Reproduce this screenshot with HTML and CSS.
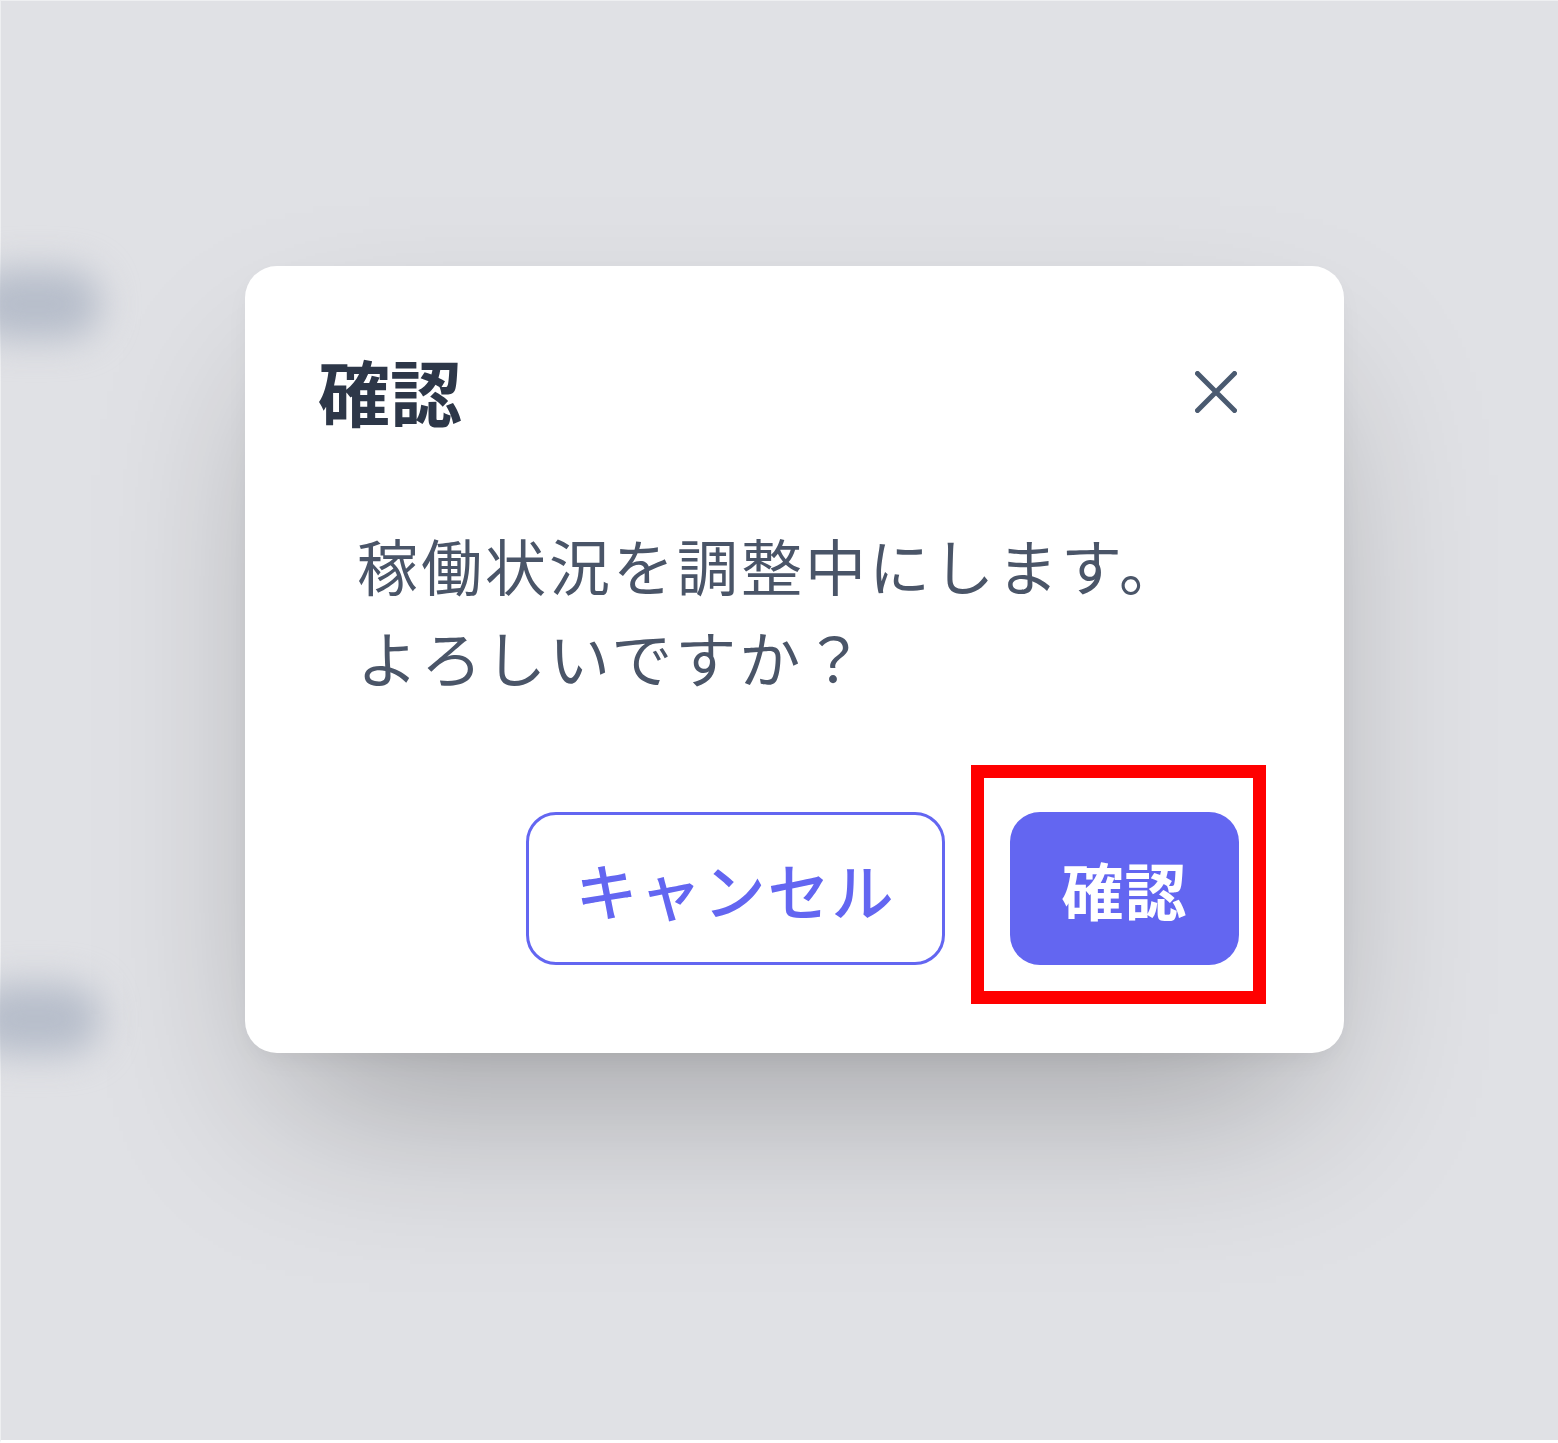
FILE: index.html
```html
<!DOCTYPE html>
<html lang="ja">
<head>
<meta charset="utf-8">
<title>確認</title>
<link rel="stylesheet" href="styles.css">
</head>
<body>
<div class="backdrop">
  <div class="bg-col">
    <div class="bg-item"></div>
    <div class="bg-item"></div>
  </div>
</div>
<div class="overlay">
  <div class="modal">
    <div class="modal-header">
      <h2 class="modal-title">確認</h2>
      <button class="close-btn" aria-label="閉じる">
        <svg width="42" height="42" viewBox="0 0 42 42" fill="none" stroke="#4a5a70" stroke-width="5" stroke-linecap="round">
          <path d="M2.5 2.5 L39.5 39.5 M39.5 2.5 L2.5 39.5"/>
        </svg>
      </button>
    </div>
    <p class="modal-body">稼働状況を調整中にします。<br>よろしいですか？</p>
    <div class="modal-footer">
      <button class="btn btn-cancel">キャンセル</button>
      <button class="btn btn-confirm">確認<span class="highlight"></span></button>
    </div>
  </div>
</div>
</body>
</html>
```
FILE: styles.css
```css
html, body {
  margin: 0;
  padding: 0;
}
body {
  width: 1558px;
  height: 1443px;
  overflow: hidden;
  background: #e0e1e5;
  font-family: "Noto Sans CJK JP", "Noto Sans", sans-serif;
  position: relative;
}
.backdrop {
  height: 100%;
  box-sizing: border-box;
  border-top: 1px solid #eeeff1;
  border-left: 1px solid #eeeff1;
  border-bottom: 3px solid #ffffff;
}
.bg-col {
  display: flex;
  flex-direction: column;
  padding-top: 268px;
  gap: 645px;
}
.bg-item {
  width: 130px;
  height: 70px;
  margin-left: -30px;
  background: #b6bdca;
  border-radius: 35px;
  filter: blur(18px);
}
.overlay {
  position: absolute;
  inset: 0;
  padding: 266px 0 0 245px;
  box-sizing: border-box;
}
.modal {
  width: 1099px;
  height: 787px;
  box-sizing: border-box;
  background: #ffffff;
  border-radius: 32px;
  box-shadow: 0 85px 170px -40px rgba(0, 0, 0, 0.28), 0 10px 30px -10px rgba(0, 0, 0, 0.08);
  padding: 86px 105px 0 75px;
  display: flex;
  flex-direction: column;
}
.modal-header {
  display: flex;
  justify-content: space-between;
  align-items: center;
  height: 76px;
}
.modal-title {
  margin: 0 0 0 -2px;
  font-size: 72px;
  line-height: 76px;
  font-weight: 700;
  color: #2d3748;
}
.close-btn {
  border: none;
  background: none;
  padding: 0;
  margin: 4px 2px 0 0;
  width: 42px;
  height: 42px;
  display: flex;
}
.modal-body {
  margin: 91px 0 0 37px;
  font-size: 61px;
  line-height: 92px;
  color: #4a5568;
  letter-spacing: 3px;
}
.modal-footer {
  margin-top: 109px;
  display: flex;
  justify-content: flex-end;
  gap: 65px;
}
.btn {
  height: 153px;
  box-sizing: border-box;
  border-radius: 30px;
  font-family: inherit;
  font-size: 62px;
  padding: 0;
}
.btn-cancel {
  width: 419px;
  background: #ffffff;
  border: 3px solid #6366f1;
  color: #6366f1;
  font-weight: 500;
  letter-spacing: 2px;
}
.btn-confirm {
  width: 229px;
  background: #6366f1;
  border: none;
  color: #ffffff;
  font-weight: 700;
  letter-spacing: 1px;
  position: relative;
}
.highlight {
  position: absolute;
  left: -39px;
  top: -47px;
  right: -27px;
  bottom: -39px;
  border: 13px solid #ff0000;
}
```
